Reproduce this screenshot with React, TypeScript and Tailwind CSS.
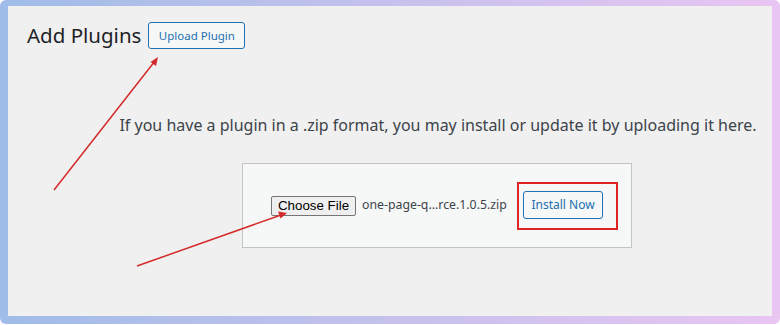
import React from "react";

const wpFont = { fontFamily: '"Noto Sans", "Open Sans", sans-serif' };

export default function App() {
  return (
    <div className="w-[780px] h-[324px] bg-white">
      <div className="relative w-[780px] h-[324px] rounded-[6px] bg-gradient-to-r from-[#a0bce8] to-[#e9c5f2] pt-[6px] pl-[8px] pr-[8px] pb-[8px]">
        <div className="h-full bg-[#f0f0f0] pt-[16px] pl-[19px]" style={wpFont}>
          <div className="flex items-center gap-[7px]">
            <h1 className="text-[20.5px] leading-[27px] text-[#1d2327] font-normal whitespace-nowrap">Add Plugins</h1>
            <button className="h-[27px] w-[97px] rounded-[3px] border border-[#2271b1] bg-[#f6f7f7] text-[#2271b1] text-[11.5px] leading-[25px] whitespace-nowrap">
              Upload Plugin
            </button>
          </div>
          <p className="pl-[77px] mt-[64px] text-center text-[16px] leading-[24px] text-[#3c434a] whitespace-nowrap">
            If you have a plugin in a .zip format, you may install or update it by uploading it here.
          </p>
          <div className="pl-[75px] flex justify-center mt-[26px]">
            <div className="w-[390px] h-[85px] border border-[#c3c4c7] bg-[#f6f7f7] flex items-center pl-[28px]">
              <button
                className="shrink-0 h-[20px] w-[85px] rounded-[2px] border border-[#767676] bg-[#efefef] text-black text-[13.33px] leading-[18px] whitespace-nowrap"
                style={{ fontFamily: '"Liberation Sans", Arial, sans-serif' }}
              >
                Choose File
              </button>
              <span className="shrink-0 ml-[6px] text-[12.3px] text-[#3c434a] whitespace-nowrap">one-page-q...rce.1.0.5.zip</span>
              <div className="shrink-0 ml-auto mr-[13px] border-2 border-[#e02424] pt-[7px] pb-[9px] pl-[4px] pr-[13px]">
                <button className="h-[28px] w-[80px] rounded-[3px] border border-[#2271b1] bg-[#f6f7f7] text-[#2271b1] text-[12px] leading-[26px] whitespace-nowrap">
                  Install Now
                </button>
              </div>
            </div>
          </div>
        </div>
        <svg className="absolute left-0 top-0 pointer-events-none" width="780" height="324" viewBox="0 0 780 324">
          <line x1="54" y1="190" x2="155" y2="61" stroke="#d42a2a" strokeWidth="1.5" />
          <polygon points="158,57 150.5,62 156,66" fill="#d42a2a" />
          <line x1="137" y1="266" x2="281" y2="215" stroke="#d42a2a" strokeWidth="1.5" />
          <polygon points="287,213 278,211.5 280.5,218.5" fill="#d42a2a" />
        </svg>
      </div>
    </div>
  );
}
